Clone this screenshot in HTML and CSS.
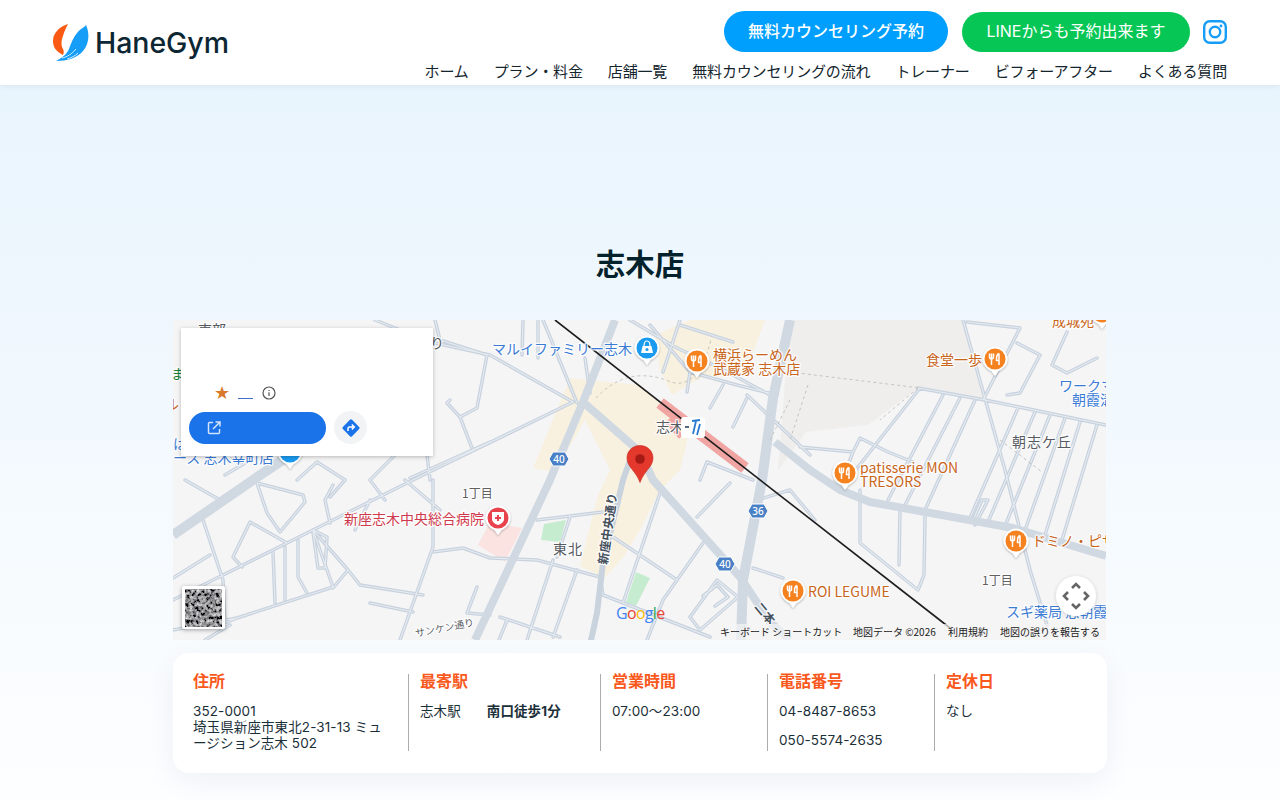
FILE: index.html
```html
<!DOCTYPE html>
<html lang="ja">
<head>
<meta charset="utf-8">
<title>志木店 | HaneGym</title>
<link rel="stylesheet" href="styles.css">
</head>
<body>
<header class="site-header">
  <a class="logo" href="#">
    <svg class="logo-mark" viewBox="0 0 36 38" width="36" height="38" aria-hidden="true">
      <path class="flame" d="M15 0C6 3 0 9 0 17c0 7 4 11 10 14 1-2 1-4 0-6-2-3-2-8 0-13 1-4 3-8 5-12Z"/>
      <path class="feather" d="M33 1c-2 3-5 3-9 8-4 5-6 10-8 16-2 5-7 9-13 12 11 0 21-3 27-10 6-7 7-17 3-26Z"/>
      <path class="feather-cut" d="M9 34c5-1 10-4 14-9M14 35c4-1 8-3 11-6"/>
    </svg>
    <span class="logo-text">HaneGym</span>
  </a>
  <div class="header-right">
    <div class="actions">
      <a class="pill pill-blue" href="#">無料カウンセリング予約</a>
      <a class="pill pill-green" href="#">LINEからも予約出来ます</a>
      <a class="insta" href="#" aria-label="Instagram">
        <svg viewBox="0 0 24 24" width="24" height="24">
          <rect x="1.2" y="1.2" width="21.6" height="21.6" rx="5.5"/>
          <circle cx="12" cy="12" r="5.2"/>
          <circle class="insta-dot" cx="18" cy="6" r="1.4"/>
        </svg>
      </a>
    </div>
    <nav class="nav">
      <a href="#">ホーム</a>
      <a href="#">プラン・料金</a>
      <a href="#">店舗一覧</a>
      <a href="#">無料カウンセリングの流れ</a>
      <a href="#">トレーナー</a>
      <a href="#">ビフォーアフター</a>
      <a href="#">よくある質問</a>
    </nav>
  </div>
</header>

<main class="store">
  <h1 class="store-title">志木店</h1>

  <section class="map">
    <svg class="map-canvas" viewBox="173 320 933 320" width="933" height="320" aria-label="地図">
      <defs>
        <filter id="sat" x="0" y="0" width="100%" height="100%">
          <feTurbulence type="fractalNoise" baseFrequency="0.3" numOctaves="3" seed="7"/>
          <feColorMatrix type="matrix" values="1.5 0 0 0 -0.48  1.5 0 0 0 -0.48  1.5 0 0 0 -0.47  0 0 0 0 1"/>
        </filter>
        <filter id="pinshadow" x="-40%" y="-40%" width="180%" height="180%">
          <feDropShadow dx="0" dy="1" stdDeviation="1" flood-color="#000" flood-opacity=".3"/>
        </filter>
        <g id="pin-base" filter="url(#pinshadow)">
          <path class="pin-white" d="M-12.5 0a12.5 12.5 0 1 1 25 0c0 6-5 10-9 12l-3.500 5-3.500-5c-4-2-9-6-9-12Z"/>
        </g>
        <g id="pin-food">
          <use href="#pin-base"/>
          <circle class="pin-orange" r="10.500"/>
          <path class="pin-glyph" d="M-5.500-5.500V-2q0 2 2 2t2-2V-5.500M-3.500-5.500V6M4-5.500q-2.500 1-2.500 5V1.500H4M4-5.500V6"/>
        </g>
        <path id="minor-paths" d="M543 320 577 403M490 355 573 402 413 480 313 530 213 580 173 600M375 320 430 342 490 355M523 320 522 355M538 320 538 358M585 358 590 393M600 365 583 398
        M630 320 677 348 720 368 770 395M650 325 690 372 737 385 777 395M680 320 663 372M680 325 733 342M687 392 690 372M710 408 723 385M733 427 747 398M747 395 810 455M700 480 707 462 753 480
        M435 320 440 340 487 355 477 408 460 417 447 403 450 400M460 417 472 448M490 442 410 478M427 455 430 480M297 480 317 462 345 480 330 497M395 455 370 480 385 500M340 430 300 445M250 460 225 475M215 440 240 465M185 480 220 500
        M257 483 303 495 305 502 280 532 267 513 257 483M287 543 250 522 233 557 242 567M203 520 213 550 223 580 225 623M313 530 327 570 333 587 237 618 225 623M273 552 275 603M285 547 285 600M298 540 298 577 307 593M313 532 318 568 325 568 327 537 313 530M313 530 348 570 333 588M348 570 360 585 423 595M333 485 325 500 330 523M433 480 433 547 400 640M433 552 463 548 490 558 537 560 600 577M370 603 413 612M477 587 467 613 490 615M173 578 210 555M173 630 237 618M205 640 230 625M405 480 440 510M370 500 355 530
        M603 595 710 637M553 560 527 640M577 570 553 637M500 617 560 637M507 620 497 645M537 520 603 512M570 517 557 557M613 537 677 580M660 493 623 603M703 543 663 600 647 640M730 483 697 517M690 617 717 580 738 597 700 630 690 617M703 596 717 585 728 597 715 606M753 568 783 578M603 595 600 577
        M800 447 853 452 860 438 888 452 913 462M853 452 848 465M860 490 860 543 918 590 924 575 925 515M900 510 899 565M757 500 790 490 815 520
        M918 388 985 400 1106 425M920 388 840 490M943 395 888 500M960 398 905 505M975 400 925 510M1018 408 970 518M1035 412 988 522M1050 415 1005 526M1065 418 1025 530M1080 422 1045 535M1097 425 1062 540M963 320 1005 470 1030 570 1047 625M967 322 1020 328 983 400M1017 343 1040 355 1020 393 1007 395M1067 332 1052 365 1067 373 1097 358M973 520 982 500 988 500 975 525"/>
      </defs>

      <rect class="ground" x="173" y="320" width="933" height="320"/>
      <path class="building" d="M790 320H964L984 398 918 388 868 425 806 432 778 470Z"/>
      <path class="beige" d="M570 378 640 385 690 430 680 470 660 490 640 530 625 555 605 578 580 566 598 495 610 470 585 420 555 472 533 468ZM655 335 690 320H765L745 375 700 378 672 395 660 370Z"/>
      <path class="hospital" d="M490 522 522 528 505 562 478 545Z"/>
      <path class="park" d="M544 524 566 520 560 542 541 540ZM636 572 650 578 636 606 626 602Z"/>
      <path class="station" d="M660 403 745 468"/>
      <path class="station-thin" d="M668 420 682 436"/>

      <use href="#minor-paths" class="road-minor"/>
      <use href="#minor-paths" class="road-minor-inner"/>

      <path class="road-major" d="M615 320 583 402 550 480 475 640"/>
      <path class="road-major" d="M583 402 640 452 653 480 740 577 770 622 790 640"/>
      <path class="road-major road-wide" d="M790 320 773 398 762 480 743 580 741 640"/>
      <path class="road-major" d="M775 442 810 470 840 490 870 502 1013 528 1106 556"/>
      <path class="road-major road-wide" d="M173 535 253 480 290 455"/>
      <path class="road-mid" d="M633 452 623 480 603 563 597 613 590 645"/>
      <path class="dashed" d="M596 398q30-32 70-18 30 15 45-40M790 372 920 388M918 388 880 420M808 385 790 440M770 440 790 400M1000 440 1042 472"/>
      <path class="rail" d="M555 320 950 628"/>

      <g class="shield">
        <path d="M549 459 553 452H565L569 459 565 466H553Z"/>
        <path d="M748 511 752 504H764L768 511 764 518H752Z"/>
        <path d="M715 564 719 557H731L735 564 731 571H719Z"/>
      </g>
      <g class="shield-text">
        <text x="559" y="463">40</text>
        <text x="758" y="515">36</text>
        <text x="725" y="568">40</text>
      </g>

      <g class="lbl lbl-blue">
        <text x="492" y="354">マルイファミリー志木</text>
        <text x="1059" y="391">ワークマン</text>
        <text x="1072" y="405">朝霞溝沼店</text>
        <text x="1006" y="617">スギ薬局 志朝霞</text>
        <text x="173" y="463">ース 志木幸町店</text>
        <text x="173" y="449">は</text>
      </g>
      <g class="lbl lbl-orange">
        <text x="713" y="360">横浜らーめん</text>
        <text x="713" y="374">武蔵家 志木店</text>
        <text x="926" y="365">食堂一歩</text>
        <text x="860" y="473">patisserie MON</text>
        <text x="860" y="487">TRESORS</text>
        <text x="1032" y="546">ドミノ・ピザ</text>
        <text x="808" y="597">ROI LEGUME</text>
        <text x="1052" y="326">成城苑</text>
        <text x="165" y="409">ル</text>
      </g>
      <g class="lbl lbl-green"><text x="171" y="379">ま</text></g>
      <g class="lbl lbl-red"><text x="344" y="524">新座志木中央総合病院</text></g>
      <g class="lbl lbl-dark">
        <text x="656" y="432">志木</text>
        <text class="spaced" x="1012" y="447">朝志ケ丘</text>
        <text class="spaced" x="553" y="554">東北</text>
        <text x="198" y="335">東部</text>
        <text x="430" y="348">り</text>
      </g>
      <g class="lbl-small">
        <text x="462" y="498">1丁目</text>
        <text x="982" y="585">1丁目</text>
      </g>
      <text class="lbl-road" transform="translate(607 565) rotate(-82)">新座中央通り</text>
      <text class="lbl-road-small" transform="translate(416 637) rotate(-11)">サンケン通り</text>
      <text class="lbl-road" transform="translate(754 607) rotate(50)">二本</text>

      <use href="#pin-food" x="697" y="361"/>
      <use href="#pin-food" x="995" y="359"/>
      <use href="#pin-food" x="845" y="473"/>
      <use href="#pin-food" x="1016" y="541"/>
      <use href="#pin-food" x="793" y="591"/>
      <use href="#pin-food" x="1102" y="312"/>

      <g transform="translate(647 348)">
        <use href="#pin-base"/>
        <circle class="pin-blue" r="10.500"/>
        <path class="pin-bag" d="M-6 5-4.500-2H4.500L6 5Z"/>
        <path class="pin-bag-handle" d="M-3-2q0-5 3-5t3 5"/>
        <circle class="pin-blue" cy="1.500" r="1.500"/>
      </g>
      <g transform="translate(290 452)">
        <use href="#pin-base"/>
        <circle class="pin-blue" r="10.500"/>
      </g>
      <g transform="translate(498 518)">
        <use href="#pin-base"/>
        <circle class="pin-red" r="10.500"/>
        <path class="pin-bag" d="M-6-6H6V1Q6 5 0 7-6 5-6 1Z"/>
        <path class="pin-cross" d="M0-3V3M-3 0H3"/>
      </g>

      <g class="station-mark">
        <rect x="681" y="417" width="24" height="21" rx="3"/>
        <path class="st-grey" d="M685 427H689"/>
        <path class="st-blue" d="M692 421 700 420M696 421 693 434M700 424 697 435"/>
      </g>

      <path class="marker" d="M640 445.500c-7.500 0-13 5.500-13 12.500 0 9 9 13 13 24.500 4-11.500 13-15.500 13-24.500 0-7-5.500-12.500-13-12.500Z"/>
      <circle class="marker-dot" cx="640" cy="459" r="4.800"/>

      <g class="google">
        <text x="616" y="619"><tspan class="g-b">G</tspan><tspan class="g-r">o</tspan><tspan class="g-y">o</tspan><tspan class="g-b">g</tspan><tspan class="g-g">l</tspan><tspan class="g-r">e</tspan></text>
      </g>

      <rect class="attrib-bg" x="714" y="624" width="392" height="16"/>
      <g class="attrib">
        <text x="720" y="636">キーボード ショートカット</text>
        <text x="853" y="636">地図データ ©2026</text>
        <text x="948" y="636">利用規約</text>
        <text x="1000" y="636">地図の誤りを報告する</text>
      </g>

      <g class="sat-thumb">
        <rect class="sat-frame" x="182" y="586" width="43" height="43" rx="2"/>
        <rect x="185" y="589" width="37" height="38" filter="url(#sat)"/>
      </g>

      <g class="fullscreen">
        <circle cx="1076" cy="596" r="20"/>
        <path d="M1072 588 1076 584 1080 588M1072 604 1076 608 1080 604M1068 592 1064 596 1068 600M1084 592 1088 596 1084 600"/>
      </g>
    </svg>

    <div class="place-card">
      <div class="rating">
        <span class="star">★</span>
        <span class="rating-link"></span>
        <svg class="info" viewBox="0 0 14 14" width="14" height="14" aria-hidden="true">
          <circle cx="7" cy="7" r="6"/>
          <path d="M7 6.200V10M7 4V5"/>
        </svg>
      </div>
      <div class="place-actions">
        <a class="open-btn" href="#" aria-label="開く">
          <svg viewBox="0 0 16 16" width="16" height="16" aria-hidden="true">
            <path d="M7 2.500H3.500a1 1 0 0 0-1 1v9a1 1 0 0 0 1 1h9a1 1 0 0 0 1-1V9M9.500 2H14V6.500M14 2 7 9"/>
          </svg>
        </a>
        <a class="dir-btn" href="#" aria-label="ルート">
          <svg viewBox="0 0 20 20" width="20" height="20" aria-hidden="true">
            <rect class="dir-diamond" x="3.500" y="3.500" width="13" height="13" rx="1.500" transform="rotate(45 10 10)"/>
            <path class="dir-arrow" d="M7 13V10.500q0-1.500 1.500-1.500H13M10.800 6.500 13.300 9l-2.500 2.500"/>
          </svg>
        </a>
      </div>
    </div>
  </section>

  <section class="info-card">
    <div class="info-col">
      <h2>住所</h2>
      <p>352-0001<br>埼玉県新座市東北2-31-13 ミュージション志木 502</p>
    </div>
    <div class="info-col">
      <h2>最寄駅</h2>
      <p class="station-row"><span>志木駅</span><strong>南口徒歩1分</strong></p>
    </div>
    <div class="info-col">
      <h2>営業時間</h2>
      <p>07:00〜23:00</p>
    </div>
    <div class="info-col">
      <h2>電話番号</h2>
      <p class="tel">04-8487-8653</p>
      <p class="tel">050-5574-2635</p>
    </div>
    <div class="info-col">
      <h2>定休日</h2>
      <p>なし</p>
    </div>
  </section>
</main>
</body>
</html>
```
FILE: styles.css
```css
* { box-sizing: border-box; }
html, body { margin: 0; height: 100%; }
body {
  font-family: Inter, "Noto Sans CJK JP", "Noto Sans", sans-serif;
  color: #0a2530;
  background: linear-gradient(180deg, #e6f3fd 0, #fdfeff 100%);
  overflow: hidden;
}
a { color: inherit; text-decoration: none; }

/* header */
.site-header {
  height: 85px;
  padding: 11px 53px 0;
  background: #fff;
  box-shadow: 0 1px 6px rgba(40, 80, 120, .08);
  display: flex;
  justify-content: space-between;
  position: relative;
}
.logo { display: flex; align-items: center; gap: 6px; height: 63px; }
.logo-mark { flex: none; }
.flame { fill: #fb5a14; }
.feather { fill: #169df7; }
.feather-cut { fill: none; stroke: #fff; stroke-width: .8; }
.logo-text {
  font-family: Inter, "Liberation Sans", sans-serif;
  font-size: 28.500px;
  font-weight: 500;
  line-height: 1;
  color: #0c2733;
  letter-spacing: -.05px;
  padding-top: 2px;
}
.header-right { display: flex; flex-direction: column; align-items: flex-end; }
.actions { display: flex; align-items: center; gap: 14px; height: 41px; }
.pill {
  height: 41px;
  border-radius: 21px;
  padding: 0 24px 2px;
  display: flex;
  align-items: center;
  color: #fff;
  font-size: 16px;
  line-height: 1;
  white-space: nowrap;
}
.pill-blue { background: #009ffd; font-weight: 500; }
.pill-green { background: #06c755; height: 40px; padding: 0 24.500px 2px; }
.insta { display: block; width: 24px; height: 24px; margin-left: -1px; }
.insta svg { display: block; fill: none; stroke: #169df7; stroke-width: 2.400; }
.insta-dot { fill: #169df7; stroke: none; }
.nav { display: flex; gap: 25px; margin-top: 9px; font-size: 15px; line-height: 22px; letter-spacing: -.15px; color: #14252d; white-space: nowrap; }

/* main */
.store { width: 934px; margin: 0 auto; }
.store-title {
  margin: 0;
  padding-top: 159px;
  height: 235px;
  text-align: center;
  font-size: 29.500px;
  line-height: 40px;
  font-weight: 700;
  color: #04222c;
}

/* map */
.map { position: relative; width: 933px; height: 320px; overflow: hidden; }
.map-canvas { display: block; }
.ground { fill: #f5f5f6; }
.building { fill: #efeeec; }
.beige { fill: #f9f1e0; }
.hospital { fill: #fae3e1; }
.park { fill: #c6ecd0; }
.station { fill: none; stroke: #f0a5a3; stroke-width: 12; }
.station-thin { fill: none; stroke: #f0a5a3; stroke-width: 8; }
.road-minor { fill: none; stroke: #c8d2de; stroke-width: 3.500; stroke-linejoin: round; stroke-linecap: round; }
.road-minor-inner { fill: none; stroke: #e6ebf0; stroke-width: 1.100; stroke-linejoin: round; stroke-linecap: round; }
.road-major { fill: none; stroke: #d0d9e2; stroke-width: 8; stroke-linejoin: round; }
.road-wide { stroke-width: 10; }
.road-mid { fill: none; stroke: #c9d3de; stroke-width: 6; }
.dashed { fill: none; stroke: #c4c4bf; stroke-width: 1; stroke-dasharray: 3 3; }
.rail { stroke: #1d1d1d; stroke-width: 1.600; }
.shield path { fill: #4a80c5; stroke: #fff; stroke-width: 1; }
.shield-text text { fill: #fff; font-size: 10px; font-weight: 500; text-anchor: middle; font-family: "Noto Sans", sans-serif; }

.lbl text, .lbl-small text, .lbl-road, .lbl-road-small {
  paint-order: stroke;
  stroke: rgba(255, 255, 255, .85);
  stroke-width: 2.500px;
  stroke-linejoin: round;
}
.lbl { font-size: 14px; font-family: "Noto Sans CJK JP", sans-serif; }
.lbl-blue { fill: #3a7bd5; }
.lbl-orange { fill: #c9651b; }
.lbl-green { fill: #188038; }
.lbl-red { fill: #d0384b; }
.lbl-dark { fill: #555b61; }
.spaced { letter-spacing: 1px; }
.lbl-small { font-size: 12px; fill: #616161; font-family: "Noto Sans CJK JP", sans-serif; }
.lbl-road { font-size: 12px; font-weight: 700; fill: #45505c; font-family: "Noto Sans CJK JP", sans-serif; }
.lbl-road-small { font-size: 10px; fill: #5f6368; font-family: "Noto Sans CJK JP", sans-serif; }

.pin-white { fill: #fff; }
.pin-orange { fill: #f5811f; }
.pin-blue { fill: #1a9bf0; }
.pin-red { fill: #e8424d; }
.pin-glyph { fill: none; stroke: #fff; stroke-width: 1.500; }
.pin-bag { fill: #fff; }
.pin-bag-handle { fill: none; stroke: #fff; stroke-width: 1.200; }
.pin-cross { fill: none; stroke: #e8424d; stroke-width: 2; }

.station-mark rect { fill: #fff; }
.st-grey { fill: none; stroke: #54687c; stroke-width: 2; }
.st-blue { fill: none; stroke: #2a7bd0; stroke-width: 1.800; }

.marker { fill: #e5382d; stroke: #c2261d; stroke-width: .6; }
.marker-dot { fill: #a61a14; }

.google text { font-family: "Open Sans", sans-serif; font-size: 16px; font-weight: 500; letter-spacing: -.7px; }
.g-b { fill: #4285f4; }
.g-r { fill: #ea4335; }
.g-y { fill: #fbbc05; }
.g-g { fill: #34a853; }

.attrib-bg { fill: rgba(245, 245, 245, .7); }
.attrib { font-size: 10px; fill: #222; font-family: "Noto Sans CJK JP", sans-serif; }

.sat-frame { fill: #fff; filter: drop-shadow(0 1px 2px rgba(0, 0, 0, .35)); }

.fullscreen circle { fill: #fff; filter: drop-shadow(0 1px 2px rgba(0, 0, 0, .15)); }
.fullscreen path { fill: none; stroke: #666; stroke-width: 2.600; }

.place-card {
  position: absolute;
  left: 8px;
  top: 8px;
  width: 252px;
  height: 128px;
  background: #fff;
  box-shadow: 0 1px 4px rgba(0, 0, 0, .25);
  padding: 56px 8px 0;
}
.rating { display: flex; align-items: center; height: 18px; padding-left: 25px; }
.star { width: 17px; color: #d9792b; font-size: 18px; line-height: 18px; font-family: "DejaVu Sans", sans-serif; }
.rating-link { display: block; width: 15px; height: 1px; margin: 14px 9px 0 7px; background: #3d6fc4; align-self: flex-start; }
.info circle, .info path { fill: none; stroke: #555; stroke-width: 1.200; }
.place-actions { display: flex; align-items: center; gap: 8px; margin-top: 9px; }
.open-btn {
  width: 137px;
  height: 32px;
  border-radius: 16px;
  background: #1a73e8;
  display: flex;
  align-items: center;
  padding-left: 17px;
}
.open-btn path { fill: none; stroke: #d2e3fc; stroke-width: 1.500; }
.dir-btn {
  width: 33px;
  height: 33px;
  border-radius: 50%;
  background: #f1f3f4;
  display: flex;
  align-items: center;
  justify-content: center;
}
.dir-diamond { fill: #1a73e8; }
.dir-arrow { fill: none; stroke: #fff; stroke-width: 1.500; }

/* info card */
.info-card {
  margin-top: 13px;
  height: 120px;
  padding: 21px 20px 22px;
  background: #fff;
  border-radius: 16px;
  box-shadow: 0 8px 30px rgba(20, 40, 80, .06);
  display: grid;
  grid-template-columns: 215px 192px 167px 167px 1fr;
}
.info-col { border-left: 1px solid #a9adb0; padding-left: 11px; min-width: 0; }
.info-col:first-child { border-left: 0; padding-left: 0; padding-right: 22px; }
.info-col h2 {
  margin: 0 0 14px;
  font-size: 16px;
  line-height: 15px;
  font-weight: 700;
  color: #f9591c;
}
.info-col p { margin: 0; font-size: 13.500px; line-height: 16px; letter-spacing: .1px; color: #1b2f38; }
.info-col .tel + .tel { margin-top: 13px; }
.station-row { display: flex; gap: 26px; }
.station-row strong { font-weight: 700; }
```
